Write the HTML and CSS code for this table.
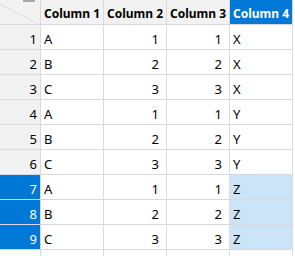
FILE: index.html
```html
<!DOCTYPE html>
<html>
<head>
<meta charset="utf-8">
<link rel="stylesheet" href="styles.css">
</head>
<body>
<div class="grid">
  <div class="cell corner">
    <svg class="diag" width="40" height="24" viewBox="0 0 40 24"><line x1="0" y1="4" x2="40" y2="25" stroke="#dcdce6" stroke-width="1"/></svg>
    <div class="grip"></div>
  </div>
  <div class="cell colhead">Column 1</div>
  <div class="cell colhead">Column 2</div>
  <div class="cell colhead">Column 3</div>
  <div class="cell colhead sel">Column 4</div>

  <div class="cell rowhead">1</div><div class="cell">A</div><div class="cell num">1</div><div class="cell num">1</div><div class="cell">X</div>
  <div class="cell rowhead">2</div><div class="cell">B</div><div class="cell num">2</div><div class="cell num">2</div><div class="cell">X</div>
  <div class="cell rowhead">3</div><div class="cell">C</div><div class="cell num">3</div><div class="cell num">3</div><div class="cell">X</div>
  <div class="cell rowhead">4</div><div class="cell">A</div><div class="cell num">1</div><div class="cell num">1</div><div class="cell">Y</div>
  <div class="cell rowhead">5</div><div class="cell">B</div><div class="cell num">2</div><div class="cell num">2</div><div class="cell">Y</div>
  <div class="cell rowhead">6</div><div class="cell">C</div><div class="cell num">3</div><div class="cell num">3</div><div class="cell">Y</div>
  <div class="cell rowhead sel">7</div><div class="cell">A</div><div class="cell num">1</div><div class="cell num">1</div><div class="cell hl">Z</div>
  <div class="cell rowhead sel">8</div><div class="cell">B</div><div class="cell num">2</div><div class="cell num">2</div><div class="cell hl">Z</div>
  <div class="cell rowhead sel">9</div><div class="cell">C</div><div class="cell num">3</div><div class="cell num">3</div><div class="cell hl">Z</div>

  <div class="cell empty"></div><div class="cell"></div><div class="cell"></div><div class="cell"></div><div class="cell"></div>
</div>
</body>
</html>
```
FILE: styles.css
```css
html, body {
  margin: 0;
  padding: 0;
  background: #ffffff;
}
body {
  font-family: "Noto Sans", "Open Sans", sans-serif;
  font-size: 13px;
  color: #000000;
  height: 256px;
  overflow: hidden;
}
.grid {
  display: grid;
  grid-template-columns: 41px 63px 63px 63px 63px;
  grid-auto-rows: 25px;
}
.cell {
  box-sizing: border-box;
  border-right: 1px solid #d8d8de;
  border-bottom: 1px solid #d8d8de;
  padding: 4px 3px 0 3px;
  line-height: 20px;
  white-space: nowrap;
  overflow: hidden;
}
.num {
  text-align: right;
  padding-right: 7px;
}
.corner {
  position: relative;
  background: #f2f2f2;
  padding: 0;
}
.diag {
  position: absolute;
  left: 0;
  top: 0;
}
.grip {
  position: absolute;
  left: 23px;
  top: 0;
  width: 12px;
  height: 2px;
  background: #a8a8a8;
}
.colhead {
  background: #f2f2f2;
  font-weight: bold;
  font-size: 12px;
}
.rowhead {
  background: #f2f2f2;
  text-align: right;
  padding-right: 3px;
}
.sel {
  background: #0078d7;
  color: #ffffff;
}
.hl {
  background: #cce4f7;
}
.empty {
  background: #ffffff;
}
```
